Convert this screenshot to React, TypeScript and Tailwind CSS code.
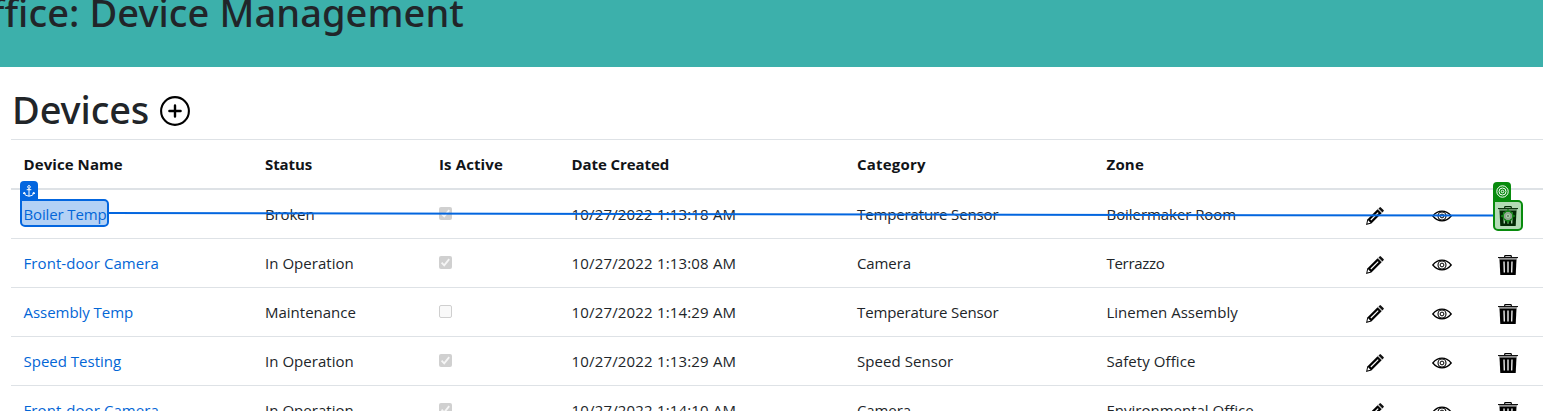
type Cell = { text: string; track?: string };

type Device = {
  name: Cell;
  status: Cell;
  active: boolean;
  created: string;
  category: Cell;
  zone: Cell;
};

const headers: Cell[] = [
  { text: "Device Name", track: "tracking-[0.08px]" },
  { text: "Status", track: "tracking-[-0.08px]" },
  { text: "Is Active", track: "tracking-[0.12px]" },
  { text: "Date Created", track: "tracking-[-0.08px]" },
  { text: "Category", track: "tracking-[0.22px]" },
  { text: "Zone", track: "tracking-[0.2px]" },
];

const inOperation: Cell = { text: "In Operation", track: "tracking-[0.04px]" };
const frontDoor: Cell = { text: "Front-door Camera", track: "tracking-[0.08px]" };
const temperature: Cell = { text: "Temperature Sensor", track: "tracking-[-0.13px]" };

const devices: Device[] = [
  {
    name: { text: "Boiler Temp", track: "tracking-[-0.14px]" },
    status: { text: "Broken", track: "tracking-[-0.15px]" },
    active: true,
    created: "10/27/2022 1:13:18 AM",
    category: temperature,
    zone: { text: "Boilermaker Room", track: "tracking-[-0.06px]" },
  },
  {
    name: frontDoor,
    status: inOperation,
    active: true,
    created: "10/27/2022 1:13:08 AM",
    category: { text: "Camera", track: "tracking-[-0.1px]" },
    zone: { text: "Terrazzo", track: "tracking-[-0.3px]" },
  },
  {
    name: { text: "Assembly Temp", track: "tracking-[-0.04px]" },
    status: { text: "Maintenance" },
    active: false,
    created: "10/27/2022 1:14:29 AM",
    category: temperature,
    zone: { text: "Linemen Assembly" },
  },
  {
    name: { text: "Speed Testing" },
    status: inOperation,
    active: true,
    created: "10/27/2022 1:13:29 AM",
    category: { text: "Speed Sensor", track: "tracking-[0.07px]" },
    zone: { text: "Safety Office", track: "tracking-[0.08px]" },
  },
  {
    name: frontDoor,
    status: inOperation,
    active: true,
    created: "10/27/2022 1:14:10 AM",
    category: { text: "Camera", track: "tracking-[-0.1px]" },
    zone: { text: "Environmental Office" },
  },
];

const columns =
  "grid grid-cols-[241.5px_174px_132.5px_285.5px_249.5px_260px_66px_66px_66px] w-[1541px]";

function PlusCircle() {
  return (
    <svg className="size-[30px]" viewBox="0 0 30 30" fill="none" stroke="#000">
      <circle cx="15" cy="15" r="13.9" strokeWidth="2.1" />
      <path d="M15 9.400v11.200M9.400 15h11.200" strokeWidth="2.4" strokeLinecap="round" />
    </svg>
  );
}

function Pencil() {
  return (
    <svg className="size-[18px]" viewBox="0 0 18 18">
      <path d="M0 18 1.300 12.400 11.600 2.200 15.600 6.200 5.400 16.400z" fill="#000" />
      <path d="m12.500 1.400 1.100-1q.6-.6 1.300 0L17.500 3q.7.700 0 1.300l-1.100 1.100z" fill="#111" />
      <path d="m11.900 1.800 4.200 4.200" stroke="#aaa" strokeWidth=".8" />
      <path d="M4.800 13 12.200 5.600" stroke="#fff" strokeWidth="1.200" />
      <path d="m1.300 16.500.8-3.200 2.400 2.400z" fill="#fff" />
    </svg>
  );
}

function Eye() {
  return (
    <svg className="size-5" viewBox="0 0 20 20" fill="none" stroke="#000">
      <path d="M.8 10Q4.800 5.200 10 5.200t9.200 4.800Q15.200 14.800 10 14.800T.8 10z" strokeWidth="1.300" />
      <circle cx="10" cy="10" r="4" strokeWidth="1.100" />
      <circle cx="10" cy="10" r="1.900" strokeWidth="1" />
    </svg>
  );
}

function Trash() {
  return (
    <svg className="size-5" viewBox="0 0 20 20" fill="none">
      <path d="M6.700 2V1.300q0-.7.700-.7h5.200q.7 0 .7.700V2" stroke="#000" strokeWidth="1.200" />
      <path d="M0 2h20v1.100H0z" fill="#111" />
      <path d="M1 3.100h18v1.300H1z" fill="#8c8c8c" />
      <path d="M1.500 4.400h17L17.700 20H2.300z" fill="#000" />
      <path d="m6 6.500.3 11M10 6.500v11M14 6.500l-.3 11" stroke="#fff" strokeWidth="1.300" />
    </svg>
  );
}

function Anchor() {
  return (
    <svg className="size-3" viewBox="0 0 12 12" fill="none" stroke="#fff" strokeWidth="1">
      <circle cx="6" cy="1.900" r="1.300" />
      <path d="M6 3.200v8M3.700 4.700h4.600M1 7.500q.6 3.700 5 3.700t5-3.700M.3 9l.9-1.800 1.500 1.300M11.700 9l-.9-1.800-1.500 1.300" />
    </svg>
  );
}

function Target() {
  return (
    <svg className="size-[13px]" viewBox="0 0 13 13" fill="none" stroke="#fff">
      <circle cx="6.500" cy="6.500" r="5.700" strokeWidth="1" />
      <circle cx="6.500" cy="6.500" r="3.500" strokeWidth="1" />
      <circle cx="6.500" cy="6.500" r="1.300" strokeWidth="1" />
    </svg>
  );
}

function Crosshair() {
  return (
    <svg className="size-[14px]" viewBox="0 0 14 14" fill="none">
      <circle cx="7" cy="7" r="3.200" fill="#b4dab4" stroke="#8fa88f" strokeWidth="2.400" />
      <circle cx="7" cy="7" r="4.900" stroke="#148a18" strokeWidth="1.200" />
      <path d="M7 0v3M7 11v3M0 7h3M11 7h3" stroke="#148a18" strokeWidth="1.400" />
      <circle cx="7" cy="7" r="1.200" fill="#6f8f6f" />
    </svg>
  );
}

function Checkbox({ checked }: { checked: boolean }) {
  return checked ? (
    <span className="flex size-[13px] items-center justify-center rounded-[2px] bg-[#d0d0d0]">
      <svg className="size-[13px]" viewBox="0 0 13 13" fill="none">
        <path d="m2.600 6.700 2.600 2.700 5-6.300" stroke="#f6f6f6" strokeWidth="1.800" />
      </svg>
    </span>
  ) : (
    <span className="block size-[13px] rounded-[2px] border border-[#cfcfcf] bg-[#f9f9f9]" />
  );
}

function AnchorMarker() {
  return (
    <div className="absolute top-[9px] left-[9px] h-7 w-[89px] rounded-[5px] rounded-tl-none border-2 border-[#0366df] bg-[#0366df]/30">
      <div className="absolute -top-5 -left-0.5 flex h-[19px] w-[18px] items-center justify-center rounded-t-[4px] bg-[#0366df]">
        <Anchor />
      </div>
    </div>
  );
}

function TargetMarker() {
  return (
    <div className="absolute top-[10px] left-[7px] flex h-[31px] w-[30px] items-center justify-center rounded-[5px] rounded-tl-none border-2 border-[#088b0d] bg-[#088b0d]/30">
      <Crosshair />
      <div className="absolute -top-5 -left-0.5 flex h-[19px] w-[18px] items-center justify-center rounded-t-[4px] bg-[#088b0d]">
        <Target />
      </div>
    </div>
  );
}

function Connector() {
  return (
    <svg className="absolute top-5 left-[98px] h-2 w-[1385px]" viewBox="0 0 1385 8">
      <path d="M0 3 1385 5.600" stroke="#0366df" strokeWidth="2" />
    </svg>
  );
}

export default function App() {
  return (
    <div className="h-[411px] w-full overflow-hidden bg-white font-['Open_Sans',sans-serif] text-[15px] leading-6 text-[#212529]">
      <header className="h-[67px] overflow-hidden bg-[#3cb0ab]">
        <h1 className="-mt-3 flex w-[464px] justify-end font-['Noto_Sans',sans-serif] text-[38px] leading-[48px] font-medium tracking-[0.08px] whitespace-nowrap">
          Back Office: Device Management
        </h1>
      </header>

      <main className="pl-[11px]">
        <div className="flex h-[72px] items-center gap-[11px] pt-3 pl-px">
          <h2 className="w-[137px] font-['Noto_Sans',sans-serif] text-[38px] leading-[48px] font-medium tracking-[-0.12px] whitespace-nowrap">
            Devices
          </h2>
          <div className="pt-1">
            <PlusCircle />
          </div>
        </div>

        <div className={`${columns} h-[51px] items-center border-t border-b-2 border-[#dee2e6] font-bold text-[#111418]`}>
          {headers.map((h) => (
            <div key={h.text} className={`pl-[12.5px] ${h.track ?? ""}`}>
              {h.text}
            </div>
          ))}
        </div>

        {devices.map((d, i) => (
          <div
            key={i}
            className={`${columns} relative h-[49px] items-center border-b border-[#dee2e6] whitespace-nowrap`}
          >
            <a className={`pl-[12.5px] text-[#0366d6] ${d.name.track ?? ""}`}>{d.name.text}</a>
            <div className={`pl-[12.5px] ${d.status.track ?? ""}`}>{d.status.text}</div>
            <div className="pb-px pl-[12.5px]">
              <Checkbox checked={d.active} />
            </div>
            <div className="pl-[12.5px] tracking-[0.17px]">{d.created}</div>
            <div className={`pl-[12.5px] ${d.category.track ?? ""}`}>{d.category.text}</div>
            <div className={`pl-[12.5px] ${d.zone.track ?? ""}`}>{d.zone.text}</div>
            <div className="pt-1 pl-3">
              <Pencil />
            </div>
            <div className="pt-1 pl-3">
              <Eye />
            </div>
            <div className="pt-1 pl-3">
              <Trash />
            </div>
            {i === 0 && (
              <>
                <Connector />
                <AnchorMarker />
                <div className="absolute top-0 left-[1475px]">
                  <TargetMarker />
                </div>
              </>
            )}
          </div>
        ))}
      </main>
    </div>
  );
}
